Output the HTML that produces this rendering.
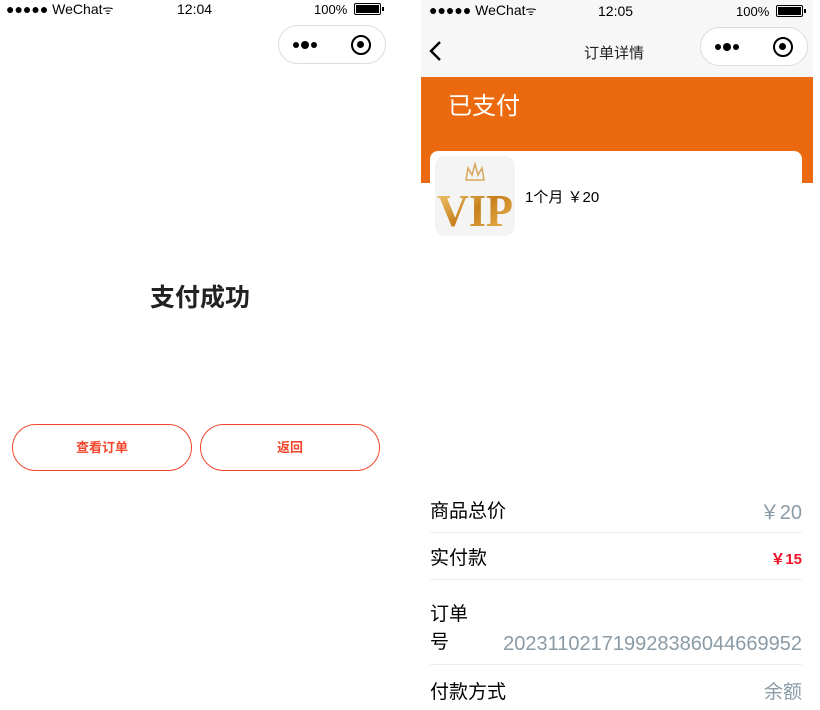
<!DOCTYPE html>
<html><head><meta charset="utf-8"><style>
*{margin:0;padding:0;box-sizing:border-box}
body{width:820px;height:710px;background:#fff;position:relative;overflow:hidden;font-family:"Liberation Sans","Noto Sans CJK SC",sans-serif;color:#000}
.a{position:absolute}
.sb{font-size:14px;white-space:nowrap}
.cap{position:absolute;width:108px;height:39px;border:1px solid #dcdcdc;border-radius:20px;background:#fff}
.dots{position:absolute;left:14px;top:15px;height:8px;display:flex;align-items:center;gap:2px}
.dots i{display:block;background:#000;border-radius:50%}
.ring{position:absolute;right:14px;top:9px;width:20px;height:20px;border:2.5px solid #000;border-radius:50%}
.ring:after{content:"";position:absolute;left:4px;top:4px;width:7px;height:7px;background:#000;border-radius:50%}
.bat{position:absolute;width:27px;height:12px;border:1.5px solid #000;border-radius:2px}
.bat:before{content:"";position:absolute;left:1px;top:1px;right:1px;bottom:1px;background:#000}
.bat:after{content:"";position:absolute;right:-4px;top:3px;width:2px;height:4px;background:#000}
.btn{position:absolute;top:424px;width:180px;height:47px;border:1px solid #f2462c;border-radius:24px;color:#f2462c;font-weight:bold;font-size:13px;text-align:center;line-height:45px}
.row{position:absolute;left:430px;width:372px;font-size:19px;border-bottom:1px solid #eee}
.r{position:absolute;right:0;color:#8a9ba6}
</style></head><body>
<!-- left -->
<div class="a sb" style="left:6px;top:1px">●●●●● WeChat<span style="font-size:12px">ᯤ</span></div>
<div class="a sb" style="left:177px;top:1px">12:04</div>
<div class="a sb" style="left:314px;top:2px;font-size:13px">100%</div>
<div class="bat" style="left:354px;top:3px"></div>
<div class="cap" style="left:278px;top:25px"><div class="dots"><i style="width:6px;height:6px"></i><i style="width:8px;height:8px"></i><i style="width:6px;height:6px"></i></div><div class="ring"></div></div>
<div class="a" style="left:150px;top:278px;font-size:25px;font-weight:bold;color:#222">支付成功</div>
<div class="btn" style="left:12px">查看订单</div>
<div class="btn" style="left:200px">返回</div>
<!-- right -->
<div class="a" style="left:421px;top:0;width:392px;height:77px;background:#f7f7f7"></div>
<div class="a sb" style="left:429px;top:2px">●●●●● WeChat<span style="font-size:12px">ᯤ</span></div>
<div class="a sb" style="left:598px;top:3px">12:05</div>
<div class="a sb" style="left:736px;top:4px;font-size:13px">100%</div>
<div class="bat" style="left:776px;top:5px"></div>
<svg class="a" style="left:428px;top:40px" width="14" height="24"><path d="M12 2 L3 11 L12 20" stroke="#000" stroke-width="2.4" fill="none"/></svg>
<div class="a" style="left:584px;top:42px;font-size:15px;color:#222">订单详情</div>
<div class="cap" style="left:700px;top:27px"><div class="dots"><i style="width:6px;height:6px"></i><i style="width:8px;height:8px"></i><i style="width:6px;height:6px"></i></div><div class="ring"></div></div>
<div class="a" style="left:421px;top:77px;width:392px;height:106px;background:#ec6a0f"></div>
<div class="a" style="left:448px;top:86px;font-size:24px;color:#fff">已支付</div>
<div class="a" style="left:430px;top:151px;width:372px;height:110px;background:#fff;border-radius:8px"></div>
<div class="a" style="left:435px;top:156px;width:80px;height:80px;background:#f4f4f4;border-radius:10px;overflow:hidden">
<svg width="80" height="80"><defs><linearGradient id="g" x1="0" y1="0" x2="1" y2="1"><stop offset="0" stop-color="#f7d27a"/><stop offset=".5" stop-color="#c77f1c"/><stop offset="1" stop-color="#f0c05a"/></linearGradient></defs>
<path d="M31 24 L33 12 L37 19 L40 8 L43 19 L47 12 L49 24 Z" fill="none" stroke="#d6a55a" stroke-width="1.5"/>
<text x="40" y="70" text-anchor="middle" font-family="Liberation Serif,serif" font-weight="bold" font-size="46" textLength="76" lengthAdjust="spacingAndGlyphs" fill="url(#g)">VIP</text></svg></div>
<div class="a" style="left:525px;top:186px;font-size:15px">1个月 ￥20</div>
<div class="row" style="top:496px;height:37px">商品总价<span class="r" style="font-size:20px">￥20</span></div>
<div class="row" style="top:543px;height:37px">实付款<span class="r" style="color:#f0142a;font-weight:bold;font-size:15px;top:5px">￥15</span></div>
<div class="row" style="top:601px;height:64px;line-height:28px">订单<br>号<span class="r" style="bottom:6px;font-size:20px">20231102171992838604466995​2</span></div>
<div class="row" style="top:677px;height:30px;border:none">付款方式<span class="r">余额</span></div>
</body></html>
